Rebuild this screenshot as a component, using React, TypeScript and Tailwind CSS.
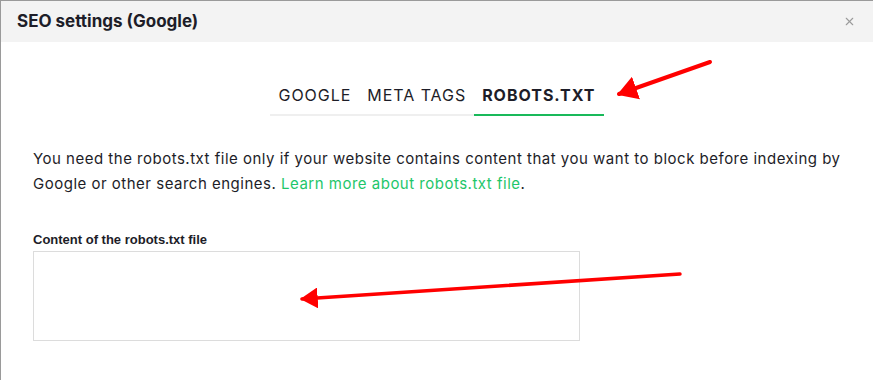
import { X } from "lucide-react";

const tabs = ["GOOGLE", "META TAGS", "ROBOTS.TXT"];

const App = () => {
  return (
    <div className="relative h-[380px] w-[873px] overflow-hidden border-t border-l border-[#9a9a9a] bg-white font-['Inter',sans-serif] text-[#1d1d28]">
      {/* Header */}
      <div className="flex h-[41px] items-center justify-between bg-[#f3f3f3] pl-4 pr-[17px]">
        <h2 className="text-[17px] font-bold">SEO settings (Google)</h2>
        <X className="h-[13px] w-[13px] text-[#9b9b9b]" strokeWidth={2} />
      </div>

      {/* Tabs */}
      <div className="mt-[41px] flex justify-center">
        <div className="flex border-b-2 border-[#efefef]">
          {tabs.map((t) => (
            <div
              key={t}
              className={`-mb-[2px] border-b-2 px-2 pb-[7px] text-[16px] tracking-[0.06em] ${
                t === "ROBOTS.TXT"
                  ? "border-[#19b95a] font-bold"
                  : "border-transparent"
              }`}
            >
              {t}
            </div>
          ))}
        </div>
      </div>

      {/* Body */}
      <div className="px-8 pt-[30px]">
        <p className="text-[15px] leading-[25px] tracking-[0.5px]">
          You need the robots.txt file only if your website contains content that you want to block before indexing by
          Google or other search engines.{" "}
          <a className="text-[#1ec66a]" href="#">
            Learn more about robots.txt file
          </a>
          .
        </p>

        <label className="mt-[36px] block font-['Liberation_Sans',sans-serif] text-[13px] font-bold leading-[16px]">
          Content of the robots.txt file
        </label>
        <textarea className="mt-[3px] block h-[90px] w-[547px] resize-none border border-[#dcdcdc] outline-none" />
      </div>

      {/* Annotation arrows */}
      <svg className="pointer-events-none absolute left-0 top-0" width="873" height="380">
        <defs>
          <marker id="head" markerWidth="6" markerHeight="6" refX="4.5" refY="3" orient="auto" markerUnits="strokeWidth">
            <path d="M0,0 L5,3 L0,6 z" fill="#ff0000" />
          </marker>
        </defs>
        <line x1="709" y1="61" x2="618" y2="93" stroke="#ff0000" strokeWidth="4" strokeLinecap="round" markerEnd="url(#head)" />
        <line x1="679" y1="273" x2="301" y2="298" stroke="#ff0000" strokeWidth="3.5" strokeLinecap="round" markerEnd="url(#head)" />
      </svg>
    </div>
  );
};

export default App;
